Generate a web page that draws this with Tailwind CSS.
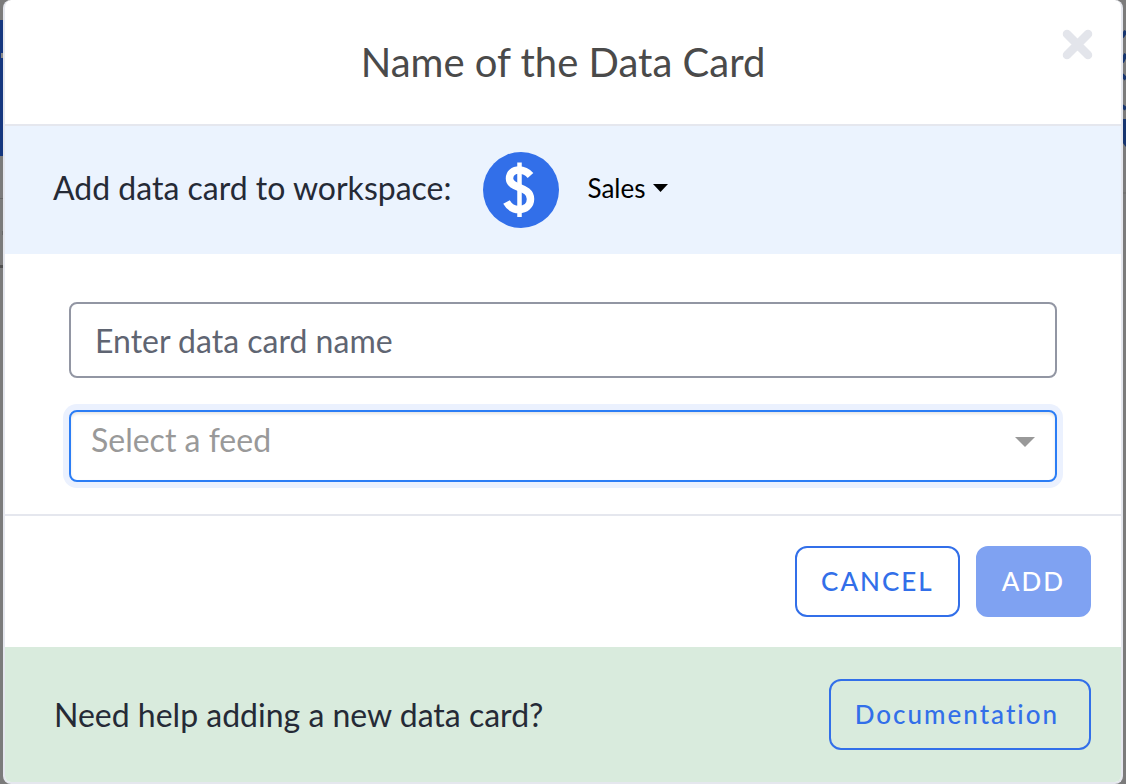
<!DOCTYPE html>
<html lang="en">
<head>
<meta charset="utf-8">
<meta name="viewport" content="width=device-width, initial-scale=1">
<title>Name of the Data Card</title>
<script src="https://cdn.jsdelivr.net/npm/@tailwindcss/browser@4"></script>
</head>
<body class="min-h-screen overflow-x-hidden bg-[#7b7b7b] font-['Lato',sans-serif] text-[#252a36]">
<!-- dimmed page behind the dialog -->
<svg class="absolute top-0 left-0 h-[280px] w-1" viewBox="0 0 4 280" aria-hidden="true">
  <path d="M0 20H4V156H0Z" fill="#15377f"/><path d="M1 53H4V58H1Z" fill="#8a8a8a"/><path d="M0 198H4V199H0ZM2 231H4V235H2Z" fill="#666"/><path d="M0 265H4V268H0Z" fill="#505050"/>
</svg>
<svg class="absolute top-0 right-0 h-[200px] w-1" viewBox="0 0 4 200" aria-hidden="true" fill="none" stroke="#17356f" stroke-width="4">
  <path d="M0 37L4 31M0 62L4 54M0 75L4 79M0 106L4 109"/><path d="M0 119H4V147L0 142Z" fill="#17356f" stroke="none"/><path d="M0 193H4" stroke="#6c6c6c" stroke-width="1"/>
</svg>
<main role="dialog" aria-labelledby="title" class="relative mx-[3px] flex min-h-screen flex-col overflow-hidden rounded-lg border-x-2 border-b-2 border-[#e5e7ee] bg-white">
  <header class="relative flex h-[126px] items-center justify-center border-b-2 border-[#e5e7ee]">
    <h1 id="title" class="text-[40px] leading-[48px] text-[#4a4a4a]">Name of the Data Card</h1>
    <button type="button" aria-label="Close" class="absolute top-[29px] right-7">
      <svg class="size-[31px]" viewBox="0 0 31 31" stroke="#e3e5eb" stroke-width="8.500" stroke-linecap="round"><path d="M5 5L26 26M26 5L5 26"/></svg>
    </button>
  </header>
  <section class="flex h-32 items-center bg-[#ebf3fe] pl-12">
    <p class="pb-1 text-[32px] leading-10">Add data card to workspace:</p>
    <svg class="ml-8 size-[76px] shrink-0" viewBox="0 0 76 76" fill="none" role="img" aria-label="Sales workspace">
      <circle cx="38" cy="38" r="38" fill="#326fe9"/>
      <path d="M47.500 23.500C44 19.500 40 18 36 18C30.500 18 26.500 21.500 26.500 26.500C26.500 37.500 47.500 33.500 47.500 47C47.500 53.500 42.500 57.500 36 57.500C30 57.500 26 54.500 23.500 50" stroke="#fff" stroke-width="7.500"/>
      <path d="M36.500 10.500V65" stroke="#fff" stroke-width="4.500"/>
    </svg>
    <button type="button" aria-haspopup="listbox" class="ml-7 flex items-center gap-2 pb-1 text-[26px] leading-8 text-black">Sales
      <svg class="h-2 w-[15px]" viewBox="0 0 15 8"><path d="M0 0H15L7.500 8Z"/></svg>
    </button>
  </section>
  <form id="card" class="flex flex-col gap-8 border-b-2 border-[#e5e7ee] px-16 pt-12 pb-8">
    <input type="text" aria-label="Data card name" placeholder="Enter data card name" class="h-[76px] w-full rounded-lg border-2 border-[#9296a3] px-6 text-[32px] outline-none placeholder:text-[#5f6572] placeholder:opacity-100">
    <div class="relative">
      <select aria-label="Feed" class="block h-[72px] w-full appearance-none rounded-lg border-2 border-[#2b7df5] bg-white px-5 pb-3 text-[32px] text-[#999] shadow-[0_0_0_6px_#ebf1fe,inset_0_2px_3px_#0000001a] outline-none"><option>Select a feed</option></select>
      <svg class="pointer-events-none absolute top-[27px] right-[22px] h-[10px] w-5" viewBox="0 0 20 10" fill="#999"><path d="M0 0H20L10 10Z"/></svg>
    </div>
  </form>
  <div class="flex justify-end gap-4 px-[30px] py-[30px]">
    <button type="button" class="h-[71px] rounded-xl border-2 border-[#326fe9] px-6 font-['Lato_Medium',Lato,sans-serif] text-[26px] font-medium tracking-[2px] text-[#326fe9]">CANCEL</button>
    <button type="submit" form="card" class="h-[71px] rounded-xl border-2 border-[#7fa2f2] bg-[#7fa2f2] px-6 font-['Lato_Medium',Lato,sans-serif] text-[26px] font-medium tracking-[2px] text-white">ADD</button>
  </div>
  <footer class="flex grow items-center justify-between bg-[#d9ebdd] pr-[30px] pl-[49px]">
    <p class="text-[32px] leading-10">Need help adding a new data card?</p>
    <a href="#documentation" class="flex h-[71px] items-center rounded-xl border-2 border-[#326fe9] pr-[30px] pl-6 font-['Lato_Medium',Lato,sans-serif] text-[26px] font-medium tracking-[2px] text-[#326fe9]">Documentation</a>
  </footer>
</main>
</body>
</html>
